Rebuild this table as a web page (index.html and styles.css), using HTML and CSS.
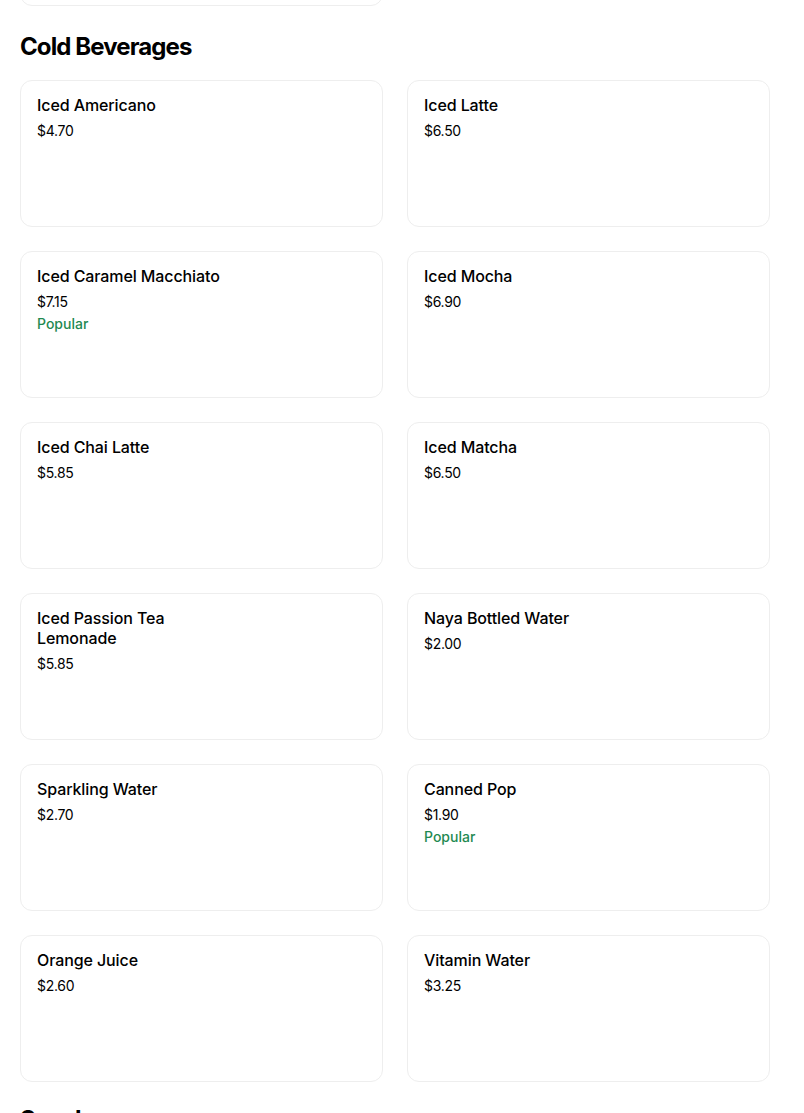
FILE: index.html
```html
<!DOCTYPE html>
<html>
<head>
<meta charset="utf-8">
<link rel="stylesheet" href="styles.css">
</head>
<body>
<main class="menu">
  <section class="section section-prev">
    <div class="grid">
      <div class="card"></div>
      <div class="card card-hidden"></div>
    </div>
  </section>
  <section class="section">
    <h2 class="section-title">Cold Beverages</h2>
    <div class="grid">
      <div class="card"><div class="info"><div class="name">Iced Americano</div><div class="price">$4.70</div></div></div>
      <div class="card"><div class="info"><div class="name">Iced Latte</div><div class="price">$6.50</div></div></div>
      <div class="card"><div class="info"><div class="name">Iced Caramel Macchiato</div><div class="price">$7.15</div><div class="tag">Popular</div></div></div>
      <div class="card"><div class="info"><div class="name">Iced Mocha</div><div class="price">$6.90</div></div></div>
      <div class="card"><div class="info"><div class="name">Iced Chai Latte</div><div class="price">$5.85</div></div></div>
      <div class="card"><div class="info"><div class="name">Iced Matcha</div><div class="price">$6.50</div></div></div>
      <div class="card"><div class="info"><div class="name">Iced Passion Tea Lemonade</div><div class="price">$5.85</div></div></div>
      <div class="card"><div class="info"><div class="name">Naya Bottled Water</div><div class="price">$2.00</div></div></div>
      <div class="card"><div class="info"><div class="name">Sparkling Water</div><div class="price">$2.70</div></div></div>
      <div class="card"><div class="info"><div class="name">Canned Pop</div><div class="price">$1.90</div><div class="tag">Popular</div></div></div>
      <div class="card"><div class="info"><div class="name">Orange Juice</div><div class="price">$2.60</div></div></div>
      <div class="card"><div class="info"><div class="name">Vitamin Water</div><div class="price">$3.25</div></div></div>
    </div>
  </section>
  <section class="section section-next">
    <h2 class="section-title">Snacks</h2>
  </section>
</main>
</body>
</html>
```

FILE: styles.css
```css
* { box-sizing: border-box; }
html, body {
  margin: 0;
  padding: 0;
  background: #ffffff;
  overflow: hidden;
}
body {
  font-family: Inter, "Noto Sans", sans-serif;
  color: #000000;
}
.menu {
  width: 750px;
  margin-left: 20px;
  margin-top: -141px;
}
.section {
  padding-top: 25px;
}
.section-prev {
  padding-top: 0;
}
.section-next {
  padding-top: 22px;
}
.section-title {
  margin: 0 0 17px 0;
  font-size: 24px;
  line-height: 32px;
  font-weight: 700;
  letter-spacing: -0.9px;
}
.grid {
  display: grid;
  grid-template-columns: 1fr 1fr;
  column-gap: 24px;
  row-gap: 24px;
}
.card {
  height: 147px;
  border: 1px solid #eeeeee;
  border-radius: 12px;
  padding: 14px 16px 16px 16px;
  background: #fff;
}
.card-hidden {
  border-color: transparent;
}
.info {
  max-width: 200px;
  display: flex;
  flex-direction: column;
}
.name {
  font-size: 16px;
  line-height: 20px;
  font-weight: 500;
  letter-spacing: -0.1px;
}
.price {
  margin-top: 6px;
  font-size: 14px;
  line-height: 20px;
  font-weight: 400;
  letter-spacing: -0.3px;
  color: #000;
}
.tag {
  margin-top: 2px;
  font-size: 14px;
  line-height: 20px;
  font-weight: 500;
  color: #1f8a52;
}
```
